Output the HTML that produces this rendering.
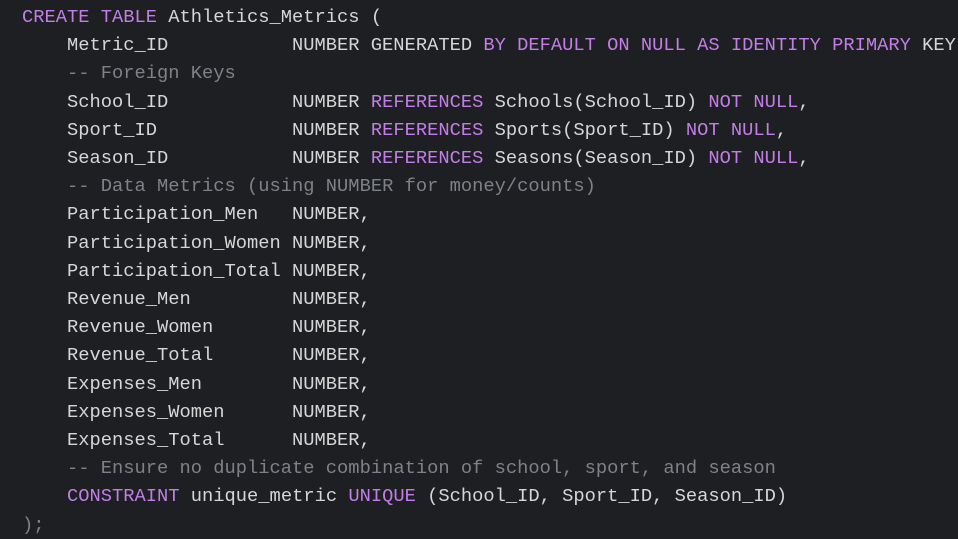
<!DOCTYPE html>
<html><head><meta charset="utf-8"><style>
html,body{margin:0;padding:0;background:#1e1f22;width:958px;height:536px;overflow:hidden}
pre{margin:0;position:absolute;left:22px;top:3px;font-family:"Liberation Mono","DejaVu Sans Mono",monospace;font-size:18.75px;line-height:28.2px;color:#d6d6d6;white-space:pre}
.k{color:#c27ee6}.c{color:#7e8287}
</style></head><body><pre><span class="k">CREATE TABLE</span> Athletics_Metrics (
    Metric_ID           NUMBER GENERATED <span class="k">BY DEFAULT ON NULL AS IDENTITY PRIMARY</span> KEY,
    <span class="c">-- Foreign Keys</span>
    School_ID           NUMBER <span class="k">REFERENCES</span> Schools(School_ID) <span class="k">NOT NULL</span>,
    Sport_ID            NUMBER <span class="k">REFERENCES</span> Sports(Sport_ID) <span class="k">NOT NULL</span>,
    Season_ID           NUMBER <span class="k">REFERENCES</span> Seasons(Season_ID) <span class="k">NOT NULL</span>,
    <span class="c">-- Data Metrics (using NUMBER for money/counts)</span>
    Participation_Men   NUMBER,
    Participation_Women NUMBER,
    Participation_Total NUMBER,
    Revenue_Men         NUMBER,
    Revenue_Women       NUMBER,
    Revenue_Total       NUMBER,
    Expenses_Men        NUMBER,
    Expenses_Women      NUMBER,
    Expenses_Total      NUMBER,
    <span class="c">-- Ensure no duplicate combination of school, sport, and season</span>
    <span class="k">CONSTRAINT</span> unique_metric <span class="k">UNIQUE</span> (School_ID, Sport_ID, Season_ID)
<span class="c">);</span></pre></body></html>
